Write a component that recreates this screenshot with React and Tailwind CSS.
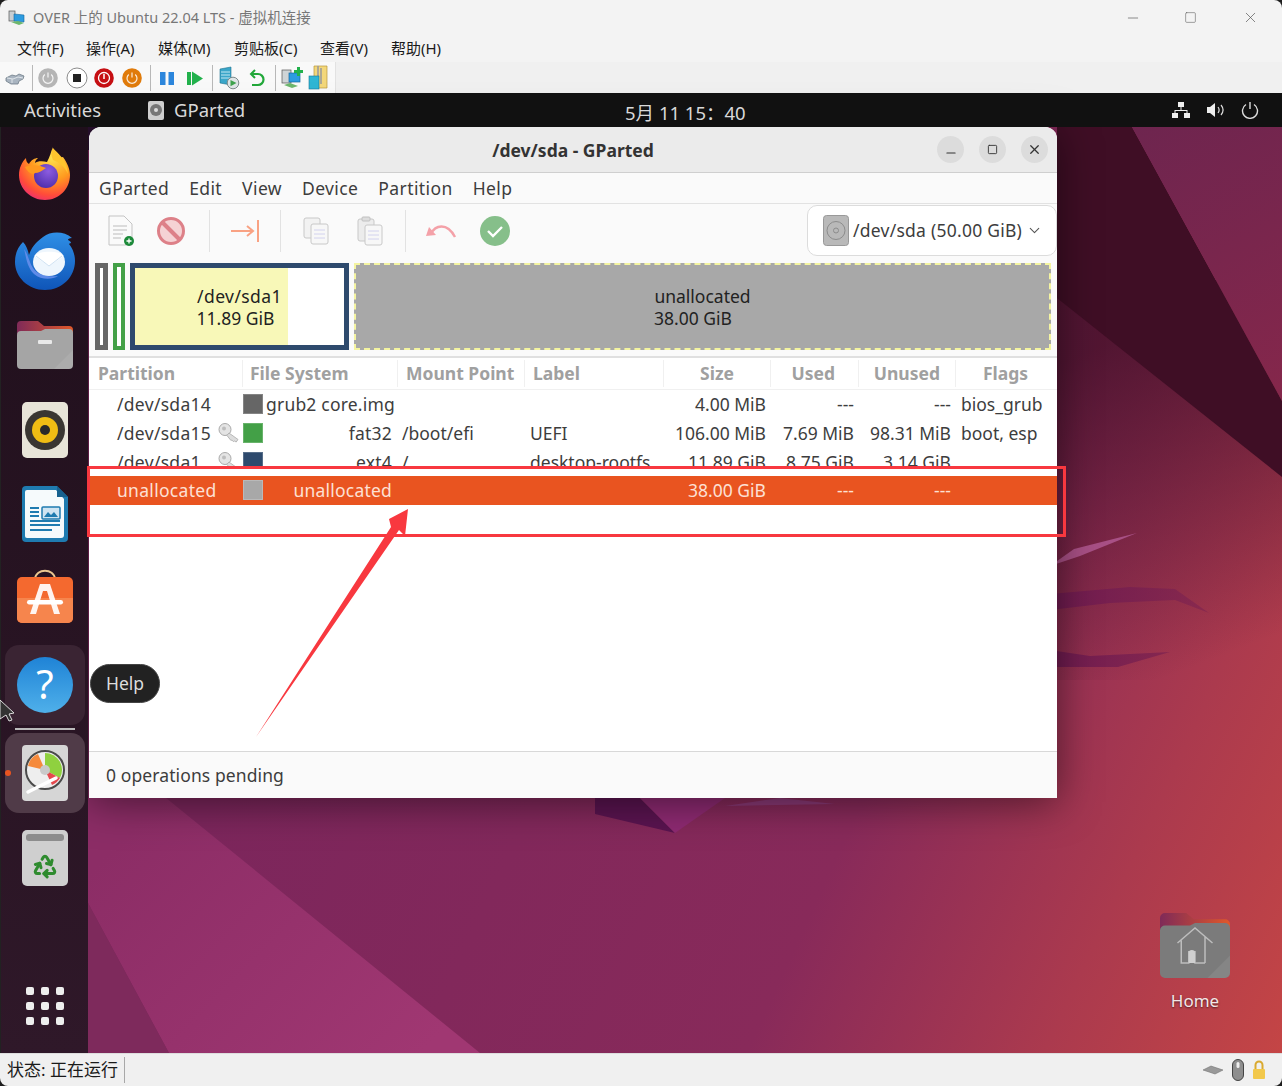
import React from 'react';
import { ChevronDown, Minus, Recycle, Square, X } from 'lucide-react';

const vmMenu = [
  { label: '文件(F)', w: 'w-[69px]' },
  { label: '操作(A)', w: 'w-[72px]' },
  { label: '媒体(M)', w: 'w-[76px]' },
  { label: '剪贴板(C)', w: 'w-[86px]' },
  { label: '查看(V)', w: 'w-[71px]' },
  { label: '帮助(H)', w: 'w-[70px]' },
];

const appMenu = ['GParted', 'Edit', 'View', 'Device', 'Partition', 'Help'];

const cols = 'grid grid-cols-[153px_155px_127px_139px_107px_88px_97px_102px]';

const rows = [
  { part: '/dev/sda14', key: false, color: 'bg-[#666666]', fs: 'grub2 core.img', mount: '', label: '', size: '4.00 MiB', used: '---', unused: '---', flags: 'bios_grub' },
  { part: '/dev/sda15', key: true, color: 'bg-[#43a047]', fs: 'fat32', mount: '/boot/efi', label: 'UEFI', size: '106.00 MiB', used: '7.69 MiB', unused: '98.31 MiB', flags: 'boot, esp' },
  { part: '/dev/sda1', key: true, color: 'bg-[#2e4a6d]', fs: 'ext4', mount: '/', label: 'desktop-rootfs', size: '11.89 GiB', used: '8.75 GiB', unused: '3.14 GiB', flags: '', clip: true },
  { part: 'unallocated', key: false, color: 'bg-[#a8a8a8]', fs: 'unallocated', mount: '', label: '', size: '38.00 GiB', used: '---', unused: '---', flags: '', selected: true },
];

const Sep = () => <div className="w-px h-[26px] bg-[#b8b8b8] mx-[7px] shrink-0" />;

const PowerRound = ({ bg, ring = 'none' }) => (
  <svg width="22" height="22" viewBox="0 0 22 22">
    <circle cx="11" cy="11" r="9.8" fill={bg} stroke={ring} />
    <path d="M7.8 7.5a5 5 0 1 0 6.4 0M11 5.5v5" fill="none" stroke="#fff" strokeOpacity="0.85" strokeWidth="1.2" />
  </svg>
);

const VmToolbar = () => (
  <div className="h-[31px] flex items-center bg-[#f0f0f0]">
    <div className="h-full w-[336px] bg-[#f9f9f9] border-r border-[#e2e2e2] flex items-center pl-[5px]">
      <svg className="shrink-0" width="20" height="16" viewBox="0 0 20 16">
        <path d="M1 8l6-3 4 1 3-2 5 2-1 3-4 2-1 3H6L1 11z" fill="#a9b4c0" stroke="#6f7c88" strokeWidth="0.8" />
        <path d="M2 8l6 1 5-2 5 1M7 9v4" fill="none" stroke="#dfe5ea" />
      </svg>
      <Sep />
      <div className="ml-[-3px]"><PowerRound bg="#b5b5b5" /></div>
      <svg className="ml-[6px]" width="24" height="24" viewBox="0 0 24 24">
        <circle cx="12" cy="12" r="10" fill="#fff" stroke="#8c8c8c" />
        <rect x="8" y="8" width="8" height="8" fill="#222" />
      </svg>
      <div className="ml-[4px]">
        <svg width="22" height="22" viewBox="0 0 22 22">
          <circle cx="11" cy="11" r="9.8" fill="#c60f13" />
          <circle cx="11" cy="11" r="5.5" fill="none" stroke="#fff" strokeWidth="1.3" />
          <path d="M11 7v5" stroke="#fff" strokeWidth="1.5" />
        </svg>
      </div>
      <div className="ml-[6px]"><PowerRound bg="#e07b0b" /></div>
      <Sep />
      <svg width="18" height="18" viewBox="0 0 18 18">
        <rect x="2" y="3" width="5.5" height="13" fill="#2c86dc" />
        <rect x="10.5" y="3" width="5.5" height="13" fill="#2c86dc" />
      </svg>
      <svg className="ml-[9px]" width="20" height="18" viewBox="0 0 20 18">
        <rect x="2" y="3" width="4" height="13" fill="#22b14c" />
        <path d="M7 2.5l11 7-11 7z" fill="#22b14c" />
      </svg>
      <Sep />
      <svg className="ml-[-2px]" width="22" height="24" viewBox="0 0 22 24">
        <path d="M2 3l11-2v18L2 17z" fill="#3aa6c9" stroke="#1f7391" strokeWidth="0.6" />
        <path d="M3 6h9M3 9h9M3 12h9" stroke="#bfe8f3" />
        <circle cx="15" cy="17" r="5.8" fill="#dfe5e6" stroke="#7f8c8d" />
        <path d="M12.5 14l6 3-6 3.2z" fill="#3fa34d" />
      </svg>
      <svg className="ml-[7px]" width="20" height="22" viewBox="0 0 20 22">
        <path d="M8 3L4 7l4 4" fill="none" stroke="#22a83a" strokeWidth="2" />
        <path d="M4.5 7H11a5.5 5.5 0 0 1 0 11H5" fill="none" stroke="#22a83a" strokeWidth="2.2" />
      </svg>
      <div className="ml-[1px]"><Sep /></div>
      <svg className="ml-[-2px]" width="24" height="24" viewBox="0 0 24 24">
        <rect x="1" y="4" width="9" height="13" fill="#cfd4d6" stroke="#555" strokeWidth="0.7" />
        <rect x="8" y="7" width="11" height="9" fill="#2c9be0" stroke="#15689f" strokeWidth="0.7" />
        <path d="M16 1h3v3h3v3h-3v3h-3V7h-3V4h3z" fill="#22b14c" />
        <path d="M3 19l8 3 6-2-8-3z" fill="#6db66d" />
      </svg>
      <svg className="ml-[3px]" width="20" height="26" viewBox="0 0 20 26">
        <path d="M6 1h13v22H6z" fill="#f3d77a" stroke="#b8973a" strokeWidth="0.7" />
        <path d="M10 1v22M13 3v16" stroke="#9c9c9c" strokeWidth="1.6" />
        <rect x="1" y="11" width="10" height="13" fill="#2fb6d4" stroke="#15799a" strokeWidth="0.6" />
      </svg>
    </div>
  </div>
);

const Firefox = () => (
  <svg width="56" height="56" viewBox="0 0 56 56">
    <defs>
      <radialGradient id="ffa" cx="0.65" cy="0.2" r="0.95">
        <stop offset="0" stopColor="#ffe14d" />
        <stop offset="0.45" stopColor="#ff9a1f" />
        <stop offset="0.75" stopColor="#ff4b3a" />
        <stop offset="1" stopColor="#e3208f" />
      </radialGradient>
      <radialGradient id="ffb" cx="0.6" cy="0.3" r="0.8">
        <stop offset="0" stopColor="#8c5ce0" />
        <stop offset="1" stopColor="#4a2aa8" />
      </radialGradient>
    </defs>
    <path d="M36 1c-1 5 2 9 7 12 0-1 1-2 3-2 5 7 7 13 7 18 0 14-11 25-25 25S2 43 2 29c0-7 3-13 7-17 0 3 1 5 3 6 2-4 6-6 9-6-2 2-3 3-3 5 2-2 8-2 12-1 3-5 4-11 6-15z" fill="url(#ffa)" />
    <circle cx="29" cy="30" r="12" fill="url(#ffb)" />
    <path d="M8 21c7-3 15-2 21 1-4 3-8 5-11 5-3 3-8-2-10-6z" fill="#ff9a1f" />
    <path d="M36 2c4 5 14 11 15 26-3-7-9-12-15-14-2-4-2-8 0-12z" fill="#ffc52e" />
  </svg>
);

const Thunderbird = () => (
  <svg width="62" height="60" viewBox="0 0 62 60">
    <defs>
      <linearGradient id="tb" x1="0" y1="0" x2="0" y2="1">
        <stop offset="0" stopColor="#2f8fe6" />
        <stop offset="1" stopColor="#0f55b8" />
      </linearGradient>
    </defs>
    <path d="M29 6c8-6 21-6 29 1-3 0-4 1-4 2 2 1 3 2 3 3-1 0-2 1-2 1 5 6 6 13 6 17 0 16-13 29-30 29S1 46 1 31c0-9 3-15 8-20 3 3 5 8 6 13 2-7 7-13 14-18z" fill="url(#tb)" />
    <path d="M10 18c2 6 2 17 10 25 7 6 18 6 24 2-8 1-20 0-25-8-4-6-5-14-9-19z" fill="#5e8be8" />
    <ellipse cx="35" cy="31" rx="16" ry="14" fill="#eef6fd" />
    <path d="M20 25c5-5 24-6 30 0l-15 10z" fill="#ffffff" />
    <path d="M22 25l13 10 13-10" fill="none" stroke="#cfe2f3" />
  </svg>
);

const FolderIcon = () => (
  <svg width="56" height="50" viewBox="0 0 56 50">
    <defs>
      <linearGradient id="fl" x1="0" y1="0" x2="1" y2="0">
        <stop offset="0" stopColor="#7f2a58" />
        <stop offset="1" stopColor="#e0582a" />
      </linearGradient>
    </defs>
    <path d="M0 5a4 4 0 0 1 4-4h17l6 5h25a4 4 0 0 1 4 4v14H0z" fill="url(#fl)" />
    <path d="M0 15a4 4 0 0 1 4-4h20l4-2h24a4 4 0 0 1 4 4v32a4 4 0 0 1-4 4H4a4 4 0 0 1-4-4z" fill="#a5a5a5" />
    <path d="M56 30v15a4 4 0 0 1-4 4H37z" fill="#fff" fillOpacity="0.08" />
    <rect x="21" y="20" width="14" height="4" rx="1" fill="#e9e9e9" />
  </svg>
);

const Rhythmbox = () => (
  <svg width="46" height="56" viewBox="0 0 46 56">
    <rect width="46" height="56" rx="5" fill="#e8e4d8" />
    <circle cx="23" cy="28" r="20" fill="#3a3632" />
    <circle cx="23" cy="28" r="13" fill="#f0bd14" />
    <circle cx="23" cy="28" r="5" fill="#2a2a2a" />
  </svg>
);

const Writer = () => (
  <svg width="46" height="56" viewBox="0 0 46 56">
    <path d="M4 0h31l11 11v41a4 4 0 0 1-4 4H4a4 4 0 0 1-4-4V4a4 4 0 0 1 4-4z" fill="#1f7bb0" />
    <path d="M5 4h29l8 9v36a3 3 0 0 1-3 3H5a2 2 0 0 1-2-2V6a2 2 0 0 1 2-2z" fill="#f6fafc" />
    <path d="M35 0l11 11H35z" fill="#17618f" />
    <rect x="20" y="21" width="18" height="12" rx="1" fill="#cfe4f2" stroke="#1f7bb0" strokeWidth="1.5" />
    <path d="M22 31l4-5 3 3 3-3 4 5z" fill="#1f7bb0" />
    <path d="M8 22h9M8 26h9M8 30h9M8 35h30M8 39h30M8 44h22" stroke="#1f7bb0" strokeWidth="2" />
  </svg>
);

const AppCenter = () => (
  <svg width="56" height="54" viewBox="0 0 56 54">
    <path d="M18 10c1-11 19-11 20 0" fill="none" stroke="#eac68f" strokeWidth="2" />
    <path d="M5 8h46a5 5 0 0 1 5 5v36a5 5 0 0 1-5 5H5a5 5 0 0 1-5-5V13a5 5 0 0 1 5-5z" fill="#f4692f" />
    <path d="M0 29h56v20a5 5 0 0 1-5 5H5a5 5 0 0 1-5-5z" fill="#f6854d" />
    <path d="M23 15h10l10 30h-6l-7-23h-4l-7 23h-6z" fill="#fff" fillOpacity="0.92" />
    <rect x="10" y="31" width="36" height="4.5" rx="2.2" fill="#fff" />
  </svg>
);

const Help = () => (
  <svg width="56" height="56" viewBox="0 0 56 56">
    <defs>
      <linearGradient id="hp" x1="0" y1="0" x2="0" y2="1">
        <stop offset="0" stopColor="#1f83d6" />
        <stop offset="1" stopColor="#4fb0ea" />
      </linearGradient>
    </defs>
    <circle cx="28" cy="28" r="28" fill="url(#hp)" />
    <text x="28" y="42" textAnchor="middle" fontSize="40" fill="#fff" fontFamily="Noto Sans">?</text>
  </svg>
);

const GPartedIcon = () => (
  <svg width="46" height="56" viewBox="0 0 46 56">
    <rect width="46" height="56" rx="4" fill="#d6d6d6" />
    <circle cx="23" cy="25" r="19" fill="#eeeeee" stroke="#4a4a4a" strokeWidth="2" />
    <path d="M23 25L6 21a17 17 0 0 1 10-12z" fill="#f58a3c" />
    <path d="M23 25V8a17 17 0 0 1 15 25z" fill="#8fd13f" />
    <path d="M23 25l15 8a17 17 0 0 1-8 7z" fill="#e5484d" />
    <circle cx="23" cy="25" r="5" fill="#c9c9c9" />
    <path d="M6 47L34 33" stroke="#fff" strokeWidth="3.5" strokeLinecap="round" />
  </svg>
);

const Trash = () => (
  <div className="relative w-[46px] h-[56px] rounded-[5px] bg-[#cfcfcf] flex items-center justify-center pt-[16px]">
    <div className="absolute left-[4px] right-[4px] top-[4px] h-[7px] rounded-[3px] bg-[#8d8d8d]" />
    <Recycle size={26} strokeWidth={2.8} className="text-[#2e8b2e]" />
  </div>
);

const Tile = ({ active, children }) => (
  <div className={`w-[80px] h-[80px] rounded-[14px] flex items-center justify-center ${active ? 'bg-[#503b48]' : 'bg-[#3a2433]'}`}>
    {children}
  </div>
);

const Dock = () => (
  <div className="relative z-10 w-[88px] shrink-0 bg-linear-to-b from-[#1f0f1b] to-[#2f1829] flex flex-col items-center border-l border-[#222]">
    <div className="mt-[19px]"><Firefox /></div>
    <div className="mt-[29px]"><Thunderbird /></div>
    <div className="mt-[29px]"><FolderIcon /></div>
    <div className="mt-[32px]"><Rhythmbox /></div>
    <div className="mt-[28px]"><Writer /></div>
    <div className="mt-[27px]"><AppCenter /></div>
    <div className="mt-[22px]"><Tile><Help /></Tile></div>
    <div className="w-[60px] h-[2px] bg-[#bbb] mt-[3px]" />
    <div className="mt-[3px] relative">
      <Tile active><GPartedIcon /></Tile>
      <div className="absolute left-[0px] top-[37px] w-[6px] h-[6px] rounded-full bg-[#e95420]" />
    </div>
    <div className="mt-[17px]"><Trash /></div>
    <div className="mt-[auto] mb-[28px] grid grid-cols-3 gap-[7px]">
      {[0, 1, 2, 3, 4, 5, 6, 7, 8].map((i) => (
        <div key={i} className="w-[8px] h-[8px] rounded-[2px] bg-[#eeeeee]" />
      ))}
    </div>
  </div>
);

const Wallpaper = () => (
  <svg className="absolute inset-0 w-full h-full" viewBox="0 93 1282 960" preserveAspectRatio="none">
    <defs>
      <linearGradient id="wp" gradientUnits="userSpaceOnUse" x1="300" y1="600" x2="1282" y2="1053">
        <stop offset="0" stopColor="#7c265c" />
        <stop offset="0.55" stopColor="#882a5a" />
        <stop offset="0.8" stopColor="#ab3a4e" />
        <stop offset="1" stopColor="#c44545" />
      </linearGradient>
      <linearGradient id="wpd" gradientUnits="userSpaceOnUse" x1="1120" y1="340" x2="1240" y2="650">
        <stop offset="0" stopColor="#3f0e25" stopOpacity="0.75" />
        <stop offset="1" stopColor="#3f0e25" stopOpacity="0" />
      </linearGradient>
      <linearGradient id="wpm" gradientUnits="userSpaceOnUse" x1="160" y1="800" x2="420" y2="1053">
        <stop offset="0" stopColor="#8c2d66" />
        <stop offset="1" stopColor="#a03772" />
      </linearGradient>
      <linearGradient id="wpt" gradientUnits="userSpaceOnUse" x1="1130" y1="130" x2="1282" y2="400">
        <stop offset="0" stopColor="#6e254f" />
        <stop offset="1" stopColor="#85274b" />
      </linearGradient>
      <linearGradient id="wps" gradientUnits="userSpaceOnUse" x1="1050" y1="600" x2="1210" y2="600">
        <stop offset="0" stopColor="#6f1b50" />
        <stop offset="1" stopColor="#7e2350" stopOpacity="0.6" />
      </linearGradient>
    </defs>
    <rect x="0" y="93" width="1282" height="960" fill="url(#wp)" />
    <rect x="1057" y="280" width="225" height="400" fill="url(#wpd)" />
    <path d="M80 127H120V150H80Z" fill="#2a1030" />
    <path d="M1057 127H1132L1282 401V477L1057 298Z" fill="#3f0e25" />
    <path d="M1132 127H1282V401Z" fill="url(#wpt)" />
    <path d="M166 798L480 1053H169L88 903V798Z" fill="url(#wpm)" />
    <path d="M88 903L169 1053H88Z" fill="#7e2a5c" />
    <path d="M1137 533L1074 549L1050 566L1080 556Z" fill="#a85085" />
    <path d="M1050 594L1130 587L1175 589L1209 613L1175 600L1110 603L1050 610Z" fill="url(#wps)" />
    <path d="M1050 650L1090 656L1170 652L1118 667L1050 667Z" fill="url(#wps)" />
    <path d="M595 798V814L675 833L640 798Z" fill="#5a1450" />
    <path d="M640 798L675 833L725 798Z" fill="#8e2a72" />
    <path d="M725 806L835 804L780 798Z" fill="#8c3a78" />
  </svg>
);

const KeyIcon = () => (
  <svg width="22" height="20" viewBox="0 0 22 20">
    <circle cx="7" cy="6.5" r="6" fill="#e4e4e4" stroke="#a9a9a9" />
    <circle cx="6" cy="5.5" r="2" fill="#bdbdbd" />
    <path d="M11 10l9 6.5-1.8 2.5-1.9-1-1 .6-1.4-1.6-1 .4-4-5z" fill="#dcdcdc" stroke="#a9a9a9" strokeWidth="0.8" />
  </svg>
);

const TableRow = ({ r }) => {
  const text = r.selected ? 'text-[#fde0d4]' : 'text-[#3d3d3d]';
  const cells = (
    <div className={`${cols} h-[28.67px] items-center ${text}`}>
      <div className="flex items-center pl-[28px] pr-[2px] justify-between tracking-[0.3px]">
        <span>{r.part}</span>
        {r.key && <KeyIcon />}
      </div>
      <div className="flex items-center pl-[1px] pr-[5px] gap-[3px]">
        <div className={`w-[20px] h-[20px] shrink-0 border border-[#fff]/20 ${r.color}`} />
        <span className="flex-1 text-right whitespace-nowrap tracking-[0.2px]">{r.fs}</span>
      </div>
      <div className="pl-[5px]">{r.mount}</div>
      <div className="pl-[6px] whitespace-nowrap">{r.label}</div>
      <div className="text-right pr-[4px]">{r.size}</div>
      <div className="text-right pr-[4px]">{r.used}</div>
      <div className="text-right pr-[4px]">{r.unused}</div>
      <div className="pl-[6px]">{r.flags}</div>
    </div>
  );
  if (r.clip) {
    // the annotation in the reference blanks the bottom of this row
    return (
      <div className="h-[28.67px]">
        <div className="h-[21px] overflow-hidden">{cells}</div>
      </div>
    );
  }
  return <div className={r.selected ? 'bg-[#e95420]' : ''}>{cells}</div>;
};

const GPartedWindow = () => (
  <div className="absolute left-[89px] top-[34px] w-[968px] h-[671px] bg-white rounded-t-[12px] flex flex-col shadow-[0_4px_40px_rgba(0,0,0,0.5)] text-[17.5px] text-[#3d3d3d] overflow-hidden">
    <div className="relative h-[46px] bg-[#ebebeb] border-b border-[#cfcfcf] flex items-center justify-center shrink-0">
      <span className="font-bold text-[#333] mt-[1px]">/dev/sda - GParted</span>
      <div className="absolute right-[9px] top-[9px] flex gap-[15px] text-[#333]">
        <div className="w-[27px] h-[27px] rounded-full bg-[#dcdcdc] flex items-center justify-center"><Minus size={14} className="mt-[6px]" /></div>
        <div className="w-[27px] h-[27px] rounded-full bg-[#dcdcdc] flex items-center justify-center"><Square size={11} /></div>
        <div className="w-[27px] h-[27px] rounded-full bg-[#dcdcdc] flex items-center justify-center"><X size={15} /></div>
      </div>
    </div>
    <div className="h-[31px] bg-[#fafafa] border-b border-[#e2e2e2] flex items-center pl-[10px] gap-[20px] tracking-[0.4px] shrink-0">
      {appMenu.map((m) => <span key={m}>{m}</span>)}
    </div>
    <div className="h-[54px] bg-[#fafafa] flex items-center shrink-0 pl-[18px] relative">
      <svg width="28" height="32" viewBox="0 0 28 32">
        <path d="M2 1h15l8 8v21H2z" fill="#fafafa" stroke="#c4c4c4" />
        <path d="M6 11h14M6 15h14M6 19h10M6 23h8" stroke="#bcbcbc" />
        <circle cx="22" cy="26" r="5" fill="#1c8a3a" />
        <path d="M19.5 26h5M22 23.5v5" stroke="#fff" strokeWidth="1.3" />
      </svg>
      <svg className="ml-[21px]" width="30" height="30" viewBox="0 0 30 30">
        <circle cx="15" cy="15" r="12.5" fill="#f5d2d4" stroke="#dd8088" strokeWidth="3" />
        <path d="M7 7l16 16" stroke="#dd8088" strokeWidth="4" />
      </svg>
      <div className="w-px h-[42px] bg-[#e2e2e2] ml-[23px]" />
      <svg className="ml-[20px]" width="30" height="24" viewBox="0 0 30 24">
        <path d="M1 12h22M17 7l6 5-6 5" fill="none" stroke="#f9a283" strokeWidth="2" />
        <path d="M28 1v22" stroke="#f9a283" strokeWidth="2" />
      </svg>
      <div className="w-px h-[42px] bg-[#e2e2e2] ml-[20px]" />
      <svg className="ml-[22px]" width="26" height="28" viewBox="0 0 26 28">
        <rect x="1" y="1" width="16" height="20" rx="2" fill="#f2f2f2" stroke="#c8c8c8" />
        <rect x="8" y="7" width="17" height="20" rx="2" fill="#f7f7f7" stroke="#c8c8c8" />
        <path d="M11 13h11M11 17h11M11 21h11" stroke="#d2d2ee" />
      </svg>
      <svg className="ml-[28px]" width="26" height="30" viewBox="0 0 26 30">
        <rect x="1" y="3" width="16" height="22" rx="2" fill="#ececec" stroke="#c8c8c8" />
        <rect x="5" y="1" width="8" height="4" rx="1" fill="#ddd" stroke="#c0c0c0" />
        <rect x="8" y="9" width="17" height="20" rx="2" fill="#f7f7f7" stroke="#c8c8c8" />
        <path d="M11 15h11M11 19h11M11 23h11" stroke="#d2d2ee" />
      </svg>
      <div className="w-px h-[42px] bg-[#e2e2e2] ml-[22px]" />
      <svg className="ml-[19px]" width="32" height="20" viewBox="0 0 32 20">
        <path d="M6 13C10 4 22 1 30 16" fill="none" stroke="#f4a1a8" strokeWidth="2.4" />
        <path d="M1 15l10-1-7-8z" fill="#f4a1a8" />
      </svg>
      <svg className="ml-[23px]" width="30" height="30" viewBox="0 0 30 30">
        <circle cx="15" cy="15" r="15" fill="#86bf8a" />
        <path d="M8 15l5 5 9-9" fill="none" stroke="#fff" strokeWidth="2.4" />
      </svg>
      <div className="absolute right-0 top-[1px] w-[250px] h-[51px] bg-white border border-[#dcdcdc] rounded-[10px] flex items-center pl-[15px] pr-[13px]">
        <svg width="26" height="31" viewBox="0 0 26 31" className="shrink-0">
          <rect x="0.5" y="0.5" width="25" height="30" rx="3" fill="#b9b9b9" stroke="#999" />
          <circle cx="13" cy="15.5" r="9" fill="none" stroke="#8c8c8c" />
          <circle cx="13" cy="15.5" r="2.5" fill="none" stroke="#8c8c8c" />
        </svg>
        <span className="ml-[4px] whitespace-nowrap tracking-[0.25px]">/dev/sda (50.00 GiB)</span>
        <ChevronDown size={17} strokeWidth={1.5} className="ml-auto text-[#555]" />
      </div>
    </div>
    <div className="h-[100px] flex items-start gap-[5px] px-[6px] pt-[5px] border-b-2 border-[#e0e0e0] bg-[#fafafa] shrink-0">
      <div className="w-[13px] h-[87px] border-[5px] border-[#666666] bg-white shrink-0" />
      <div className="w-[12px] h-[87px] border-[4px] border-[#43a047] bg-white shrink-0" />
      <div className="w-[219px] h-[87px] border-[5px] border-[#2e4a6d] bg-white shrink-0 flex relative">
        <div className="w-[153px] h-full bg-[#f8f8b8]" />
        <div className="absolute inset-0 flex flex-col items-center justify-center leading-[22px] text-[#222]">
          <span className="tracking-[0.4px]">/dev/sda1</span>
          <span className="pr-[8px]">11.89 GiB</span>
        </div>
      </div>
      <div className="flex-1 h-[87px] bg-[#a8a8a8] border-[2px] border-dashed border-[#f4f4a0] flex flex-col items-center justify-center leading-[22px] text-[#222]">
        <span>unallocated</span>
        <span className="pr-[19px]">38.00 GiB</span>
      </div>
    </div>
    <div className={`${cols} h-[32px] items-center font-bold text-[#a0a0a0] border-b border-[#f0f0f0] shrink-0`}>
      <div className="pl-[9px]">Partition</div>
      <div className="pl-[7px] border-l border-[#f0f0f0]">File System</div>
      <div className="pl-[8px] border-l border-[#f0f0f0] whitespace-nowrap">Mount Point</div>
      <div className="pl-[8px] border-l border-[#f0f0f0]">Label</div>
      <div className="text-right pr-[36px] border-l border-[#f0f0f0]">Size</div>
      <div className="text-right pr-[23px] border-l border-[#f0f0f0]">Used</div>
      <div className="text-right pr-[15px] border-l border-[#f0f0f0]">Unused</div>
      <div className="text-center pr-[2px] border-l border-[#f0f0f0]">Flags</div>
    </div>
    <div className="flex-1">
      {rows.map((r) => <TableRow key={r.part} r={r} />)}
    </div>
    <div className="h-[47px] bg-[#fafafa] border-t border-[#d8d8d8] flex items-center pl-[17px] tracking-[0.1px] shrink-0">
      0 operations pending
    </div>
  </div>
);

export default function App() {
  return (
    <div className="w-[1282px] h-[1086px] bg-[#1e1e1e] overflow-hidden relative font-['Noto_Sans','Noto_Sans_CJK_SC',sans-serif]">
      <div className="h-full flex flex-col rounded-[8px] overflow-hidden">
        <div className="h-[35px] bg-[#f3f3f3] flex items-center pl-[8px] shrink-0">
          <svg width="18" height="18" viewBox="0 0 18 18">
            <rect x="1" y="2" width="6" height="10" fill="#c8ced2" stroke="#555" strokeWidth="0.7" />
            <path d="M6 5l10 1v7L6 12z" fill="#2c9be0" stroke="#15689f" strokeWidth="0.6" />
            <path d="M3 13l8 3 5-2-6-2z" fill="#6db66d" />
          </svg>
          <span className="ml-[7px] text-[14.5px] text-[#777]">OVER 上的 Ubuntu 22.04 LTS - 虚拟机连接</span>
          <div className="ml-auto flex items-center text-[#555]">
            <Minus size={16} strokeWidth={1} className="mr-[43px]" />
            <Square size={13} strokeWidth={1} className="mr-[45px]" />
            <X size={17} strokeWidth={1} className="mr-[23px]" />
          </div>
        </div>
        <div className="h-[27px] bg-[#f3f3f3] flex items-center pl-[17px] text-[15px] text-[#1a1a1a] shrink-0">
          {vmMenu.map((m) => <span key={m.label} className={`${m.w} whitespace-nowrap`}>{m.label}</span>)}
        </div>
        <div className="shrink-0"><VmToolbar /></div>

        <div className="relative h-[960px] shrink-0 flex flex-col">
          <Wallpaper />
          <div className="relative z-20 h-[34px] bg-[#111] text-[#d9d9d9] text-[18.5px] flex items-center shrink-0">
            <span className="ml-[24px]">Activities</span>
            <svg className="ml-[47px]" width="16" height="19" viewBox="0 0 16 19">
              <rect width="16" height="19" rx="2" fill="#cfcfcf" />
              <circle cx="8" cy="9" r="6" fill="#777" />
              <circle cx="8" cy="9" r="2" fill="#ddd" />
            </svg>
            <span className="ml-[10px]">GParted</span>
            <span className="absolute left-[625px] top-[6px] whitespace-nowrap">5月 11 15：40</span>
            <div className="ml-auto flex items-center gap-[15px] pr-[23px]">
              <svg width="20" height="18" viewBox="0 0 20 18" fill="#eee">
                <rect x="7" y="1" width="6" height="5" />
                <rect x="1" y="12" width="6" height="5" />
                <rect x="13" y="12" width="6" height="5" />
                <path d="M9.5 6v3H3.5v3h1v-2h11v2h1V9h-6V6z" />
              </svg>
              <svg width="20" height="18" viewBox="0 0 20 18" fill="none">
                <path d="M1 6h3l5-4v14l-5-4H1z" fill="#eee" />
                <path d="M12 6c1.5 2 1.5 4 0 6M15 4c2.5 3 2.5 7 0 10" stroke="#ddd" strokeWidth="1.2" />
              </svg>
              <svg width="18" height="18" viewBox="0 0 18 18" fill="none" stroke="#ddd" strokeWidth="1.4">
                <path d="M5 3.5a7.5 7.5 0 1 0 8 0M9 1v7" />
              </svg>
            </div>
          </div>
          <div className="flex-1 flex min-h-0">
            <Dock />
          </div>
          <GPartedWindow />

          <div className="absolute left-[90px] top-[571px] h-[39px] px-[15px] flex items-center rounded-full bg-[#222] border border-[#444] text-[#ddd] text-[17.5px] z-30">Help</div>
          <svg className="absolute left-0 top-[606px] z-30" width="16" height="24" viewBox="0 0 16 24">
            <path d="M0 1l14 13-5 1 3 6-3 1-3-6-6 4z" fill="#333" stroke="#ddd" strokeWidth="1" />
          </svg>

          <div className="absolute left-[1160px] top-[820px] z-10 flex flex-col items-center w-[70px]">
            <svg width="70" height="65" viewBox="0 0 56 52">
              <defs>
                <linearGradient id="hm" x1="0" y1="0" x2="1" y2="0">
                  <stop offset="0" stopColor="#7f2a58" />
                  <stop offset="1" stopColor="#e0582a" />
                </linearGradient>
              </defs>
              <path d="M0 4a4 4 0 0 1 4-4h17l6 5h25a4 4 0 0 1 4 4v14H0z" fill="url(#hm)" />
              <path d="M0 14a4 4 0 0 1 4-4h20l4-2h24a4 4 0 0 1 4 4v36a4 4 0 0 1-4 4H4a4 4 0 0 1-4-4z" fill="#7b7b7b" />
              <path d="M56 34v14a4 4 0 0 1-4 4H38z" fill="#fff" fillOpacity="0.08" />
              <path d="M14 24L28 12l14 12M17 22v18h6v-9h5v9h8M36 19v21" fill="none" stroke="#bdbdbd" strokeWidth="1.2" />
              <path d="M23 40v-8a2.5 2.5 0 0 1 5 0v8z" fill="#cfcfcf" />
            </svg>
            <span className="text-[17px] text-[#f3e6e6] mt-[10px] [text-shadow:0_1px_2px_rgba(0,0,0,0.6)]">Home</span>
          </div>

          {/* annotation drawn on top of the screenshot */}
          <div className="absolute left-[87px] top-[373px] w-[979px] h-[71px] border-[3px] border-[#f8383f] z-40" />
          <svg className="absolute left-[250px] top-[410px] z-40" width="165" height="240" viewBox="0 0 165 240">
            <path d="M6 234L141 24L139 16L158 6L155 33L149 27Z" fill="#f8383f" />
          </svg>
        </div>

        <div className="h-[33px] bg-[#f0f0f0] flex items-center shrink-0 text-[17px] text-[#1a1a1a] border-t border-[#ddd]">
          <span className="pl-[7px] w-[125px] border-r border-[#a8a8a8] h-[26px] flex items-center whitespace-nowrap">状态: 正在运行</span>
          <div className="ml-auto flex items-center pr-[16px] gap-[8px]">
            <svg width="22" height="10" viewBox="0 0 22 10"><path d="M1 5l8-4 12 4-8 4z" fill="#999" stroke="#666" strokeWidth="0.5" /></svg>
            <svg width="12" height="22" viewBox="0 0 12 22"><rect x="0.5" y="0.5" width="11" height="21" rx="5.5" fill="#8e8e8e" stroke="#444" /><rect x="4.5" y="3" width="3" height="6" rx="1.5" fill="#eee" /></svg>
            <svg width="14" height="20" viewBox="0 0 14 20"><path d="M3.5 9V5a3.5 3.5 0 0 1 7 0v4" fill="none" stroke="#d9a92f" strokeWidth="2" /><rect x="1" y="9" width="12" height="10" rx="1" fill="#f2c84b" /></svg>
          </div>
        </div>
      </div>
    </div>
  );
}
